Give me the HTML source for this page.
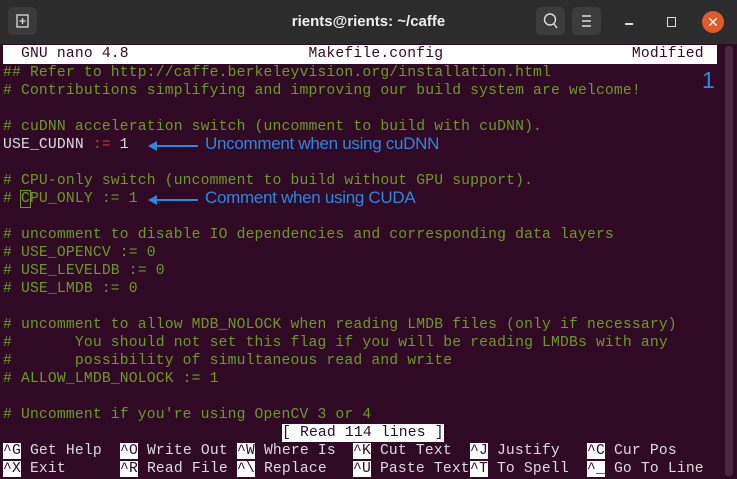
<!DOCTYPE html>
<html><head><style>
body{margin:0;width:737px;height:479px;overflow:hidden;background:#2c2c2c;font-family:"Liberation Sans",sans-serif}
#tb{position:absolute;left:0;top:0;width:737px;height:44px;background:#2c2c2c;border-radius:8px 8px 0 0}
#term{position:absolute;left:0;top:44px;width:737px;height:435px;background:#300a24}
.row{position:absolute;left:3px;height:18px;line-height:18px;font-family:"Liberation Mono",monospace;font-size:14.7px;letter-spacing:0.17px;white-space:pre;color:#ddd;margin-top:1px}
.c{color:#6c9a28}
.inv{background:#fff;color:#300a24}
.btn{position:absolute;top:7px;width:29px;height:28px;background:#3c3c3c;border-radius:5px}
.ann{position:absolute;font-family:"Liberation Sans",sans-serif;font-size:17px;letter-spacing:-0.3px;color:#2d86e0;white-space:nowrap}
.arr{position:absolute;height:2px;background:#2d86e0}
.arr:before{content:"";position:absolute;left:-8px;top:-4px;border-right:9px solid #2d86e0;border-top:5px solid transparent;border-bottom:5px solid transparent}
</style></head><body>
<div id="tb">
 <div class="btn" style="left:8px;background:#3a3a3a"><svg width="29" height="28"><rect x="9" y="8" width="11" height="12" fill="none" stroke="#ddd" stroke-width="1.3"/><path d="M14.5 11v6M11.5 14h6" stroke="#ddd" stroke-width="1.3"/></svg></div>
 <div style="position:absolute;left:0;width:737px;top:13px;text-align:center;color:#eee;font-weight:bold;font-size:15px">rients@rients: ~/caffe</div>
 <div class="btn" style="left:536px"><svg width="29" height="28"><circle cx="14" cy="12.5" r="5.5" fill="none" stroke="#ddd" stroke-width="1.4"/><path d="M18 17l3 4" stroke="#ddd" stroke-width="1.4"/></svg></div>
 <div class="btn" style="left:572px"><svg width="29" height="28"><path d="M10 9h9M10 14h9M10 19h9" stroke="#ddd" stroke-width="1.4"/></svg></div>
 <div style="position:absolute;left:625px;top:23px;width:8px;height:1.5px;background:#ddd"></div>
 <div style="position:absolute;left:667px;top:17px;width:7px;height:8px;border:1.4px solid #ddd"></div>
 <div style="position:absolute;left:702px;top:11px;width:22px;height:22px;border-radius:50%;background:#e05a2a;color:#fff;font-size:14px;text-align:center;line-height:22px">✕</div>
</div>
<div id="term">
 <div style="position:absolute;right:4px;top:2px;width:8px;height:430px;background:#4a2a40;border-radius:4px"></div>
</div>
<div class="row inv" style="top:45px;width:714px;margin-top:0;height:19px">  GNU nano 4.8                    Makefile.config                     Modified </div>
<div class="row c" style="top:63px">## Refer to http://caffe.berkeleyvision.org/installation.html</div>
<div class="row c" style="top:81px"># Contributions simplifying and improving our build system are welcome!</div>
<div class="row c" style="top:117px"># cuDNN acceleration switch (uncomment to build with cuDNN).</div>
<div class="row" style="top:135px">USE_CUDNN <span style="color:#e03030">:=</span> 1</div>
<div class="row c" style="top:171px"># CPU-only switch (uncomment to build without GPU support).</div>
<div class="row c" style="top:189px"># <span style="outline:1px solid #6c9a28">C</span>PU_ONLY := 1</div>
<div class="row c" style="top:225px"># uncomment to disable IO dependencies and corresponding data layers</div>
<div class="row c" style="top:243px"># USE_OPENCV := 0</div>
<div class="row c" style="top:261px"># USE_LEVELDB := 0</div>
<div class="row c" style="top:279px"># USE_LMDB := 0</div>
<div class="row c" style="top:315px"># uncomment to allow MDB_NOLOCK when reading LMDB files (only if necessary)</div>
<div class="row c" style="top:333px">#       You should not set this flag if you will be reading LMDBs with any</div>
<div class="row c" style="top:351px">#       possibility of simultaneous read and write</div>
<div class="row c" style="top:369px"># ALLOW_LMDB_NOLOCK := 1</div>
<div class="row c" style="top:405px"># Uncomment if you're using OpenCV 3 or 4</div>
<div class="row inv" style="top:423px;left:282px">[ Read 114 lines ]</div>
<div class="row" style="top:441px;left:3px"><span class="inv">^G</span> Get Help</div>
<div class="row" style="top:441px;left:120px"><span class="inv">^O</span> Write Out</div>
<div class="row" style="top:441px;left:237px"><span class="inv">^W</span> Where Is</div>
<div class="row" style="top:441px;left:353px"><span class="inv">^K</span> Cut Text</div>
<div class="row" style="top:441px;left:470px"><span class="inv">^J</span> Justify</div>
<div class="row" style="top:441px;left:587px"><span class="inv">^C</span> Cur Pos</div>
<div class="row" style="top:459px;left:3px"><span class="inv">^X</span> Exit</div>
<div class="row" style="top:459px;left:120px"><span class="inv">^R</span> Read File</div>
<div class="row" style="top:459px;left:237px"><span class="inv">^\</span> Replace</div>
<div class="row" style="top:459px;left:353px"><span class="inv">^U</span> Paste Text</div>
<div class="row" style="top:459px;left:470px"><span class="inv">^T</span> To Spell</div>
<div class="row" style="top:459px;left:587px"><span class="inv">^_</span> Go To Line</div>
<div class="arr" style="left:156px;top:145px;width:42px"></div>
<div class="ann" style="left:205px;top:134px">Uncomment when using cuDNN</div>
<div class="arr" style="left:156px;top:199px;width:42px"></div>
<div class="ann" style="left:205px;top:188px">Comment when using CUDA</div>
<div class="ann" style="left:702px;top:67px;font-size:23px">1</div>
</body></html>
